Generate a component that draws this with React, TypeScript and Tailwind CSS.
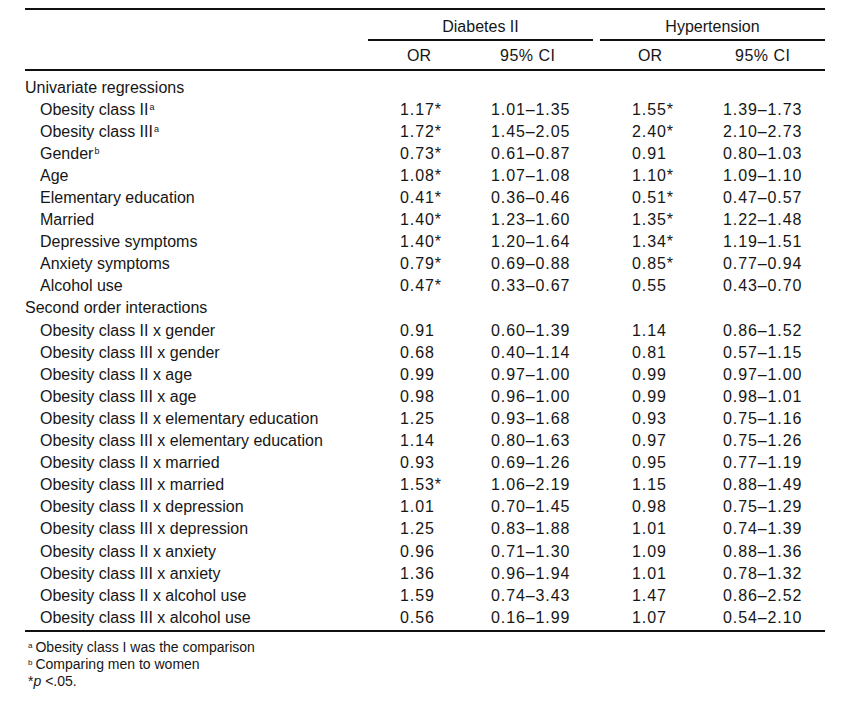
const font = { fontFamily: '"Liberation Sans", Arial, sans-serif' };

type Row = {
  label: string;
  sup?: string;
  heading?: boolean;
  vals?: [string, string, string, string];
};

const rows: Row[] = [
  { label: "Univariate regressions", heading: true },
  { label: "Obesity class II", sup: "a", vals: ["1.17*", "1.01–1.35", "1.55*", "1.39–1.73"] },
  { label: "Obesity class III", sup: "a", vals: ["1.72*", "1.45–2.05", "2.40*", "2.10–2.73"] },
  { label: "Gender", sup: "b", vals: ["0.73*", "0.61–0.87", "0.91", "0.80–1.03"] },
  { label: "Age", vals: ["1.08*", "1.07–1.08", "1.10*", "1.09–1.10"] },
  { label: "Elementary education", vals: ["0.41*", "0.36–0.46", "0.51*", "0.47–0.57"] },
  { label: "Married", vals: ["1.40*", "1.23–1.60", "1.35*", "1.22–1.48"] },
  { label: "Depressive symptoms", vals: ["1.40*", "1.20–1.64", "1.34*", "1.19–1.51"] },
  { label: "Anxiety symptoms", vals: ["0.79*", "0.69–0.88", "0.85*", "0.77–0.94"] },
  { label: "Alcohol use", vals: ["0.47*", "0.33–0.67", "0.55", "0.43–0.70"] },
  { label: "Second order interactions", heading: true },
  { label: "Obesity class II x gender", vals: ["0.91", "0.60–1.39", "1.14", "0.86–1.52"] },
  { label: "Obesity class III x gender", vals: ["0.68", "0.40–1.14", "0.81", "0.57–1.15"] },
  { label: "Obesity class II x age", vals: ["0.99", "0.97–1.00", "0.99", "0.97–1.00"] },
  { label: "Obesity class III x age", vals: ["0.98", "0.96–1.00", "0.99", "0.98–1.01"] },
  { label: "Obesity class II x elementary education", vals: ["1.25", "0.93–1.68", "0.93", "0.75–1.16"] },
  { label: "Obesity class III x elementary education", vals: ["1.14", "0.80–1.63", "0.97", "0.75–1.26"] },
  { label: "Obesity class II x married", vals: ["0.93", "0.69–1.26", "0.95", "0.77–1.19"] },
  { label: "Obesity class III x married", vals: ["1.53*", "1.06–2.19", "1.15", "0.88–1.49"] },
  { label: "Obesity class II x depression", vals: ["1.01", "0.70–1.45", "0.98", "0.75–1.29"] },
  { label: "Obesity class III x depression", vals: ["1.25", "0.83–1.88", "1.01", "0.74–1.39"] },
  { label: "Obesity class II x anxiety", vals: ["0.96", "0.71–1.30", "1.09", "0.88–1.36"] },
  { label: "Obesity class III x anxiety", vals: ["1.36", "0.96–1.94", "1.01", "0.78–1.32"] },
  { label: "Obesity class II x alcohol use", vals: ["1.59", "0.74–3.43", "1.47", "0.86–2.52"] },
  { label: "Obesity class III x alcohol use", vals: ["0.56", "0.16–1.99", "1.07", "0.54–2.10"] },
];

const cols = "grid grid-cols-[343px_112px_113px_7px_112px_113px]";

export default function App() {
  return (
    <div className="w-[850px] h-[702px] bg-white text-[#161616]" style={font}>
      <div className="ml-[25px] w-[800px] pt-[8px]">
        <div className="h-[2px] bg-[#111]" />

        {/* spanning headers */}
        <div className={`${cols} h-[29px] items-center pt-[4px] text-[16px] leading-none`}>
          <div />
          <div className="col-span-2 text-center">Diabetes II</div>
          <div />
          <div className="col-span-2 text-center">Hypertension</div>
        </div>
        <div className={cols}>
          <div />
          <div className="col-span-2 h-[1.5px] bg-[#111]" />
          <div />
          <div className="col-span-2 h-[1.5px] bg-[#111]" />
        </div>

        <div className={`${cols} h-[28px] items-center pt-[2px] text-[16px] leading-none`}>
          <div />
          <div className="pl-[39px]">OR</div>
          <div className="pl-[20px] tracking-[0.5px]">95% CI</div>
          <div />
          <div className="pl-[38px]">OR</div>
          <div className="pl-[23px] tracking-[0.5px]">95% CI</div>
        </div>
        <div className="h-[2px] bg-[#111]" />

        <div className="pt-[6px]">
          {rows.map((r) => (
            <div key={r.label} className={`${cols} h-[22.1px] items-center text-[16px] leading-none`}>
              <div className={r.heading ? "" : "pl-[15px]"}>
                {r.label}
                {r.sup && <span className="ml-[1px] align-[5px] text-[9px]">{r.sup}</span>}
              </div>
              {r.vals && (
                <>
                  <div className="pl-[32px] tracking-[0.9px]">{r.vals[0]}</div>
                  <div className="pl-[11px] tracking-[0.9px]">{r.vals[1]}</div>
                  <div />
                  <div className="pl-[32px] tracking-[0.9px]">{r.vals[2]}</div>
                  <div className="pl-[11px] tracking-[0.9px]">{r.vals[3]}</div>
                </>
              )}
            </div>
          ))}
        </div>
        <div className="mt-[1px] h-[2px] bg-[#111]" />

        <div className="mt-[6px] pl-[3px] text-[14px] leading-[16.5px]">
          <div>
            <span className="mr-[3px] align-[4px] text-[8px]">a</span>Obesity class I was the comparison
          </div>
          <div>
            <span className="mr-[3px] align-[4px] text-[8px]">b</span>Comparing men to women
          </div>
          <div>
            *<span className="italic">p</span> &lt;.05.
          </div>
        </div>
      </div>
    </div>
  );
}
